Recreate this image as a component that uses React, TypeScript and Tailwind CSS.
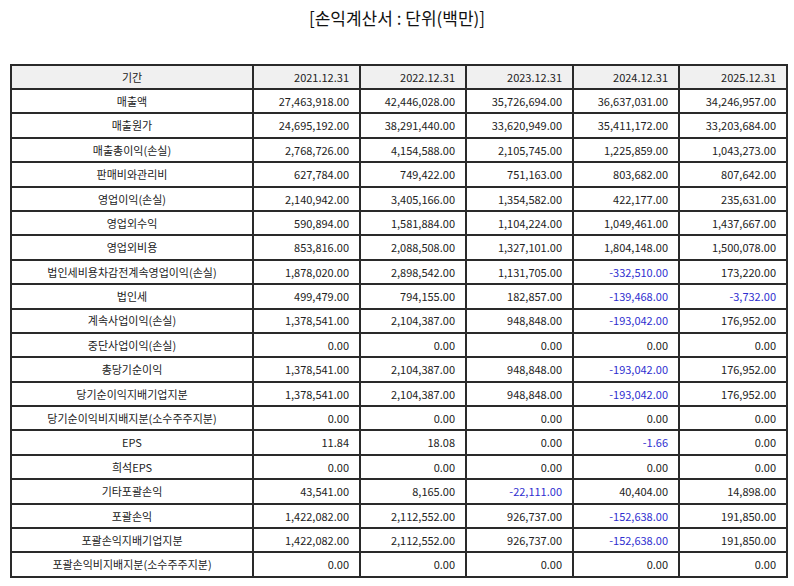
const years = ["2021.12.31", "2022.12.31", "2023.12.31", "2024.12.31", "2025.12.31"];

const rows: [string, string[]][] = [
  ["매출액", ["27,463,918.00", "42,446,028.00", "35,726,694.00", "36,637,031.00", "34,246,957.00"]],
  ["매출원가", ["24,695,192.00", "38,291,440.00", "33,620,949.00", "35,411,172.00", "33,203,684.00"]],
  ["매출총이익(손실)", ["2,768,726.00", "4,154,588.00", "2,105,745.00", "1,225,859.00", "1,043,273.00"]],
  ["판매비와관리비", ["627,784.00", "749,422.00", "751,163.00", "803,682.00", "807,642.00"]],
  ["영업이익(손실)", ["2,140,942.00", "3,405,166.00", "1,354,582.00", "422,177.00", "235,631.00"]],
  ["영업외수익", ["590,894.00", "1,581,884.00", "1,104,224.00", "1,049,461.00", "1,437,667.00"]],
  ["영업외비용", ["853,816.00", "2,088,508.00", "1,327,101.00", "1,804,148.00", "1,500,078.00"]],
  ["법인세비용차감전계속영업이익(손실)", ["1,878,020.00", "2,898,542.00", "1,131,705.00", "-332,510.00", "173,220.00"]],
  ["법인세", ["499,479.00", "794,155.00", "182,857.00", "-139,468.00", "-3,732.00"]],
  ["계속사업이익(손실)", ["1,378,541.00", "2,104,387.00", "948,848.00", "-193,042.00", "176,952.00"]],
  ["중단사업이익(손실)", ["0.00", "0.00", "0.00", "0.00", "0.00"]],
  ["총당기순이익", ["1,378,541.00", "2,104,387.00", "948,848.00", "-193,042.00", "176,952.00"]],
  ["당기순이익지배기업지분", ["1,378,541.00", "2,104,387.00", "948,848.00", "-193,042.00", "176,952.00"]],
  ["당기순이익비지배지분(소수주주지분)", ["0.00", "0.00", "0.00", "0.00", "0.00"]],
  ["EPS", ["11.84", "18.08", "0.00", "-1.66", "0.00"]],
  ["희석EPS", ["0.00", "0.00", "0.00", "0.00", "0.00"]],
  ["기타포괄손익", ["43,541.00", "8,165.00", "-22,111.00", "40,404.00", "14,898.00"]],
  ["포괄손익", ["1,422,082.00", "2,112,552.00", "926,737.00", "-152,638.00", "191,850.00"]],
  ["포괄손익지배기업지분", ["1,422,082.00", "2,112,552.00", "926,737.00", "-152,638.00", "191,850.00"]],
  ["포괄손익비지배지분(소수주주지분)", ["0.00", "0.00", "0.00", "0.00", "0.00"]],
];

export default function App() {
  return (
    <div className="w-[794px] h-[586px] bg-white text-[#222] font-['Noto_Sans_CJK_KR','Noto_Sans',sans-serif]">
      <h1 className="pt-[4px] h-[64px] text-center text-[17px] leading-[28px] text-[#111]">
        [손익계산서 : 단위(백만)]
      </h1>
      <table className="ml-[10px] w-[776px] border-collapse table-fixed text-[11px]">
        <colgroup>
          <col className="w-[242px]" />
          <col className="w-[107px]" />
          <col className="w-[106px]" />
          <col className="w-[107px]" />
          <col className="w-[106px]" />
          <col className="w-[108px]" />
        </colgroup>
        <thead>
          <tr className="h-[24px] bg-[#f0f0f0]">
            <th className="border-2 border-[#2a2a2a] font-normal text-center p-0">기간</th>
            {years.map((y) => (
              <th key={y} className="border-2 border-[#2a2a2a] font-normal text-right pr-[10px] p-0">
                {y}
              </th>
            ))}
          </tr>
        </thead>
        <tbody>
          {rows.map(([label, vals]) => (
            <tr key={label} className="h-[24.4px]">
              <td className="border-2 border-[#2a2a2a] text-center p-0">{label}</td>
              {vals.map((v, i) => (
                <td
                  key={i}
                  className={
                    v.startsWith("-")
                      ? "border-2 border-[#2a2a2a] text-right pr-[10px] p-0 text-[#2f2fd0]"
                      : "border-2 border-[#2a2a2a] text-right pr-[10px] p-0"
                  }
                >
                  {v}
                </td>
              ))}
            </tr>
          ))}
        </tbody>
      </table>
    </div>
  );
}
